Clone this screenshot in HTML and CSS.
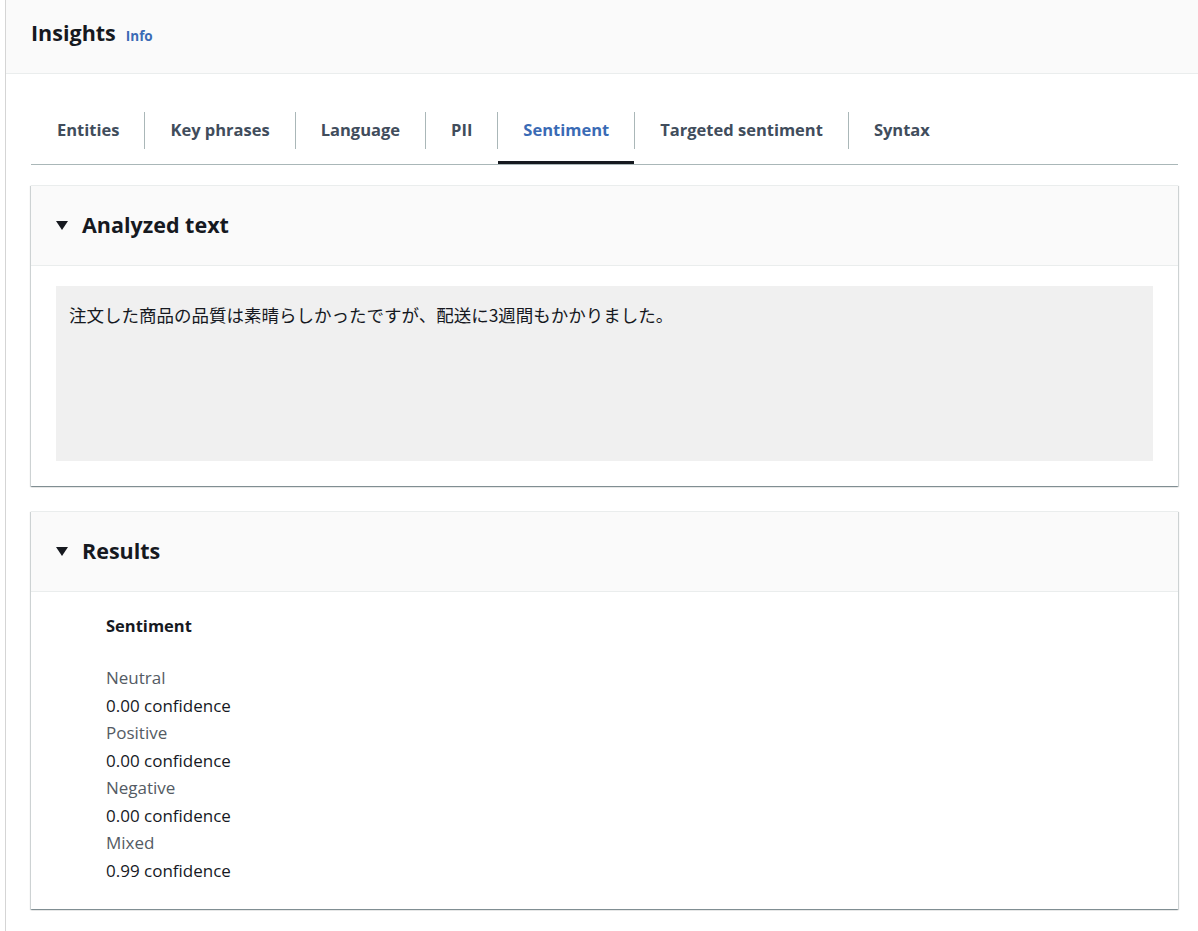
FILE: index.html
```html
<!DOCTYPE html>
<html lang="ja">
<head>
    <meta charset="utf-8">
    <meta name="viewport" content="width=device-width, initial-scale=1.0">
    <title>Insights</title>
    <link rel="stylesheet" href="styles.css">
</head>
<body>
    <div class="page">
        <header class="page-header">
            <h1>Insights</h1>
            <a href="#" class="info">Info</a>
        </header>

        <main class="content">
            <ul class="tabs">
                <li><a href="#">Entities</a></li>
                <li><a href="#">Key phrases</a></li>
                <li><a href="#">Language</a></li>
                <li><a href="#">PII</a></li>
                <li class="active"><a href="#">Sentiment</a></li>
                <li><a href="#">Targeted sentiment</a></li>
                <li><a href="#">Syntax</a></li>
            </ul>

            <section class="panel">
                <div class="panel-header">
                    <span class="caret"></span>
                    <h2>Analyzed text</h2>
                </div>
                <div class="panel-body">
                    <div class="analyzed">注文した商品の品質は素晴らしかったですが、配送に3週間もかかりました。</div>
                </div>
            </section>

            <section class="panel">
                <div class="panel-header">
                    <span class="caret"></span>
                    <h2>Results</h2>
                </div>
                <div class="panel-body results">
                    <h3>Sentiment</h3>
                    <dl class="scores">
                        <dt>Neutral</dt>
                        <dd>0.00 confidence</dd>
                        <dt>Positive</dt>
                        <dd>0.00 confidence</dd>
                        <dt>Negative</dt>
                        <dd>0.00 confidence</dd>
                        <dt>Mixed</dt>
                        <dd>0.99 confidence</dd>
                    </dl>
                </div>
            </section>
        </main>
    </div>
</body>
</html>
```

FILE: styles.css
```css
body {
    margin: 0;
    background-color: #fff;
    color: #16191f;
    font-family: "Open Sans", "Noto Sans CJK JP", sans-serif;
}

.page {
    margin-left: 5px;
    border-left: 1px solid #d5d5d5;
    min-height: 931px;
}

.page-header {
    display: flex;
    align-items: baseline;
    gap: 10px;
    padding: 18px 20px 25px 25px;
    background-color: #fafafa;
    border-bottom: 1px solid #eaeded;
}

.page-header h1 {
    margin: 0;
    font-size: 21.5px;
    line-height: 30px;
    font-weight: 700;
}

.info {
    color: #3a6bb5;
    font-size: 13.5px;
    font-weight: 700;
    text-decoration: none;
}

.content {
    padding: 0 20px 0 25px;
}

.tabs {
    display: flex;
    list-style: none;
    margin: 24px 0 0;
    padding: 0;
    border-bottom: 1px solid #aab7b8;
}

.tabs li {
    position: relative;
    padding: 14px 0 15px;
}

.tabs a {
    display: block;
    padding: 7px 25px 9px;
    line-height: 21px;
    border-left: 1px solid #aab7b8;
    color: #414d5c;
    font-size: 16.5px;
    font-weight: 700;
    text-decoration: none;
}

.tabs li:first-child a {
    border-left: none;
    padding-left: 26px;
}

.tabs li.active a {
    color: #3a6bb5;
}

.tabs li.active::after {
    content: "";
    position: absolute;
    left: 1px;
    right: 0;
    bottom: 0;
    height: 3px;
    background-color: #16191f;
}

.panel {
    margin-top: 20px;
    background-color: #fff;
    border-top: 1px solid #eaeded;
    box-shadow: 0 1px 1px 0 rgba(0, 28, 36, 0.3), 1px 1px 1px 0 rgba(0, 28, 36, 0.15), -1px 1px 1px 0 rgba(0, 28, 36, 0.15);
}

.panel + .panel {
    margin-top: 25px;
}

.panel-header {
    display: flex;
    align-items: center;
    gap: 14px;
    height: 79px;
    padding: 0 25px;
    background-color: #fafafa;
    border-bottom: 1px solid #eaeded;
}

.caret {
    width: 0;
    height: 0;
    border-left: 6px solid transparent;
    border-right: 6px solid transparent;
    border-top: 9px solid #16191f;
}

.panel-header h2 {
    margin: -3px 0 0;
    font-size: 21.5px;
    font-weight: 700;
}

.panel-body {
    padding: 20px 25px 25px;
}

.analyzed {
    height: 175px;
    box-sizing: border-box;
    padding: 18px 13px;
    background-color: #f0f0f0;
    font-size: 17.5px;
    line-height: 22px;
    font-family: "Noto Sans CJK JP", "Open Sans", sans-serif;
}

.results {
    padding: 23px 25px 25px 75px;
}

.results h3 {
    margin: 0;
    font-size: 16.5px;
    line-height: 22px;
    font-weight: 700;
}

.scores {
    margin: 27px 0 0;
    font-size: 17px;
    line-height: 27.5px;
}

.scores dt {
    color: #545b64;
}

.scores dd {
    margin: 0;
    color: #16191f;
}
```
